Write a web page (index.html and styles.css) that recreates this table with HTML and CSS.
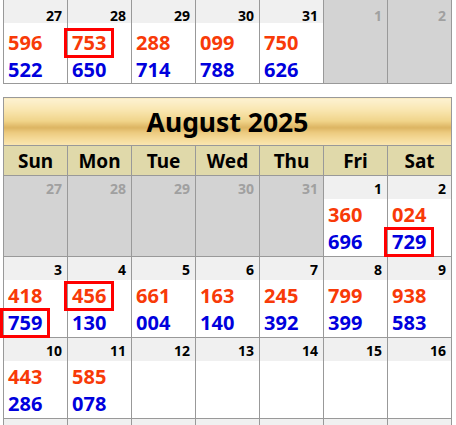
FILE: index.html
```html
<!DOCTYPE html>
<html>
<head>
<meta charset="utf-8">
<link rel="stylesheet" href="styles.css">
</head>
<body>
<div class="page">
  <table class="cal cal-prev">
    <tr>
      <td><div class="dnum">27</div><div class="nums"><div class="r">596</div><div class="b">522</div></div></td>
      <td><div class="dnum">28</div><div class="nums"><div class="r"><span class="hit">753</span></div><div class="b">650</div></div></td>
      <td><div class="dnum">29</div><div class="nums"><div class="r">288</div><div class="b">714</div></div></td>
      <td><div class="dnum">30</div><div class="nums"><div class="r">099</div><div class="b">788</div></div></td>
      <td><div class="dnum">31</div><div class="nums"><div class="r">750</div><div class="b">626</div></div></td>
      <td class="off"><div class="dnum">1</div><div class="nums"></div></td>
      <td class="off"><div class="dnum">2</div><div class="nums"></div></td>
    </tr>
  </table>

  <table class="cal cal-main">
    <thead>
      <tr><th colspan="7" class="title">August 2025</th></tr>
      <tr class="wk"><th>Sun</th><th>Mon</th><th>Tue</th><th>Wed</th><th>Thu</th><th>Fri</th><th>Sat</th></tr>
    </thead>
    <tbody>
      <tr>
        <td class="off"><div class="dnum">27</div><div class="nums"></div></td>
        <td class="off"><div class="dnum">28</div><div class="nums"></div></td>
        <td class="off"><div class="dnum">29</div><div class="nums"></div></td>
        <td class="off"><div class="dnum">30</div><div class="nums"></div></td>
        <td class="off"><div class="dnum">31</div><div class="nums"></div></td>
        <td><div class="dnum">1</div><div class="nums"><div class="r">360</div><div class="b">696</div></div></td>
        <td><div class="dnum">2</div><div class="nums"><div class="r">024</div><div class="b"><span class="hit">729</span></div></div></td>
      </tr>
      <tr>
        <td><div class="dnum">3</div><div class="nums"><div class="r">418</div><div class="b"><span class="hit">759</span></div></div></td>
        <td><div class="dnum">4</div><div class="nums"><div class="r"><span class="hit">456</span></div><div class="b">130</div></div></td>
        <td><div class="dnum">5</div><div class="nums"><div class="r">661</div><div class="b">004</div></div></td>
        <td><div class="dnum">6</div><div class="nums"><div class="r">163</div><div class="b">140</div></div></td>
        <td><div class="dnum">7</div><div class="nums"><div class="r">245</div><div class="b">392</div></div></td>
        <td><div class="dnum">8</div><div class="nums"><div class="r">799</div><div class="b">399</div></div></td>
        <td><div class="dnum">9</div><div class="nums"><div class="r">938</div><div class="b">583</div></div></td>
      </tr>
      <tr>
        <td><div class="dnum">10</div><div class="nums"><div class="r">443</div><div class="b">286</div></div></td>
        <td><div class="dnum">11</div><div class="nums"><div class="r">585</div><div class="b">078</div></div></td>
        <td><div class="dnum">12</div><div class="nums"></div></td>
        <td><div class="dnum">13</div><div class="nums"></div></td>
        <td><div class="dnum">14</div><div class="nums"></div></td>
        <td><div class="dnum">15</div><div class="nums"></div></td>
        <td><div class="dnum">16</div><div class="nums"></div></td>
      </tr>
      <tr>
        <td><div class="dnum"></div><div class="nums"></div></td>
        <td><div class="dnum"></div><div class="nums"></div></td>
        <td><div class="dnum"></div><div class="nums"></div></td>
        <td><div class="dnum"></div><div class="nums"></div></td>
        <td><div class="dnum"></div><div class="nums"></div></td>
        <td><div class="dnum"></div><div class="nums"></div></td>
        <td><div class="dnum"></div><div class="nums"></div></td>
      </tr>
    </tbody>
  </table>
</div>
</body>
</html>
```

FILE: styles.css
```css
html, body {
  margin: 0;
  padding: 0;
  overflow: hidden;
  background: #fff;
}
body {
  font-family: "Noto Sans", "Open Sans", sans-serif;
  font-weight: 700;
  color: #000;
}
.page {
  padding: 0 4px 0 3px;
}
.cal {
  border-collapse: collapse;
  table-layout: fixed;
  width: 449px;
}
.cal td,
.cal th {
  border: 1px solid #999;
  padding: 0;
  vertical-align: top;
}
.cal-prev {
  margin-top: -1px;
}
.cal-main {
  margin-top: 13px;
}
.title {
  height: 48px;
  box-sizing: border-box;
  vertical-align: middle !important;
  text-align: center;
  font-size: 26.5px;
  line-height: 38px;
  background: linear-gradient(to bottom,
    #fdf2d2 0%,
    #f9e6b0 25%,
    #f0d48a 48%,
    #dcb462 62%,
    #ecca7e 72%,
    #f6dc9c 88%,
    #fae6b2 100%);
}
.wk th {
  height: 30px;
  box-sizing: border-box;
  vertical-align: middle;
  text-align: center;
  font-size: 19px;
  line-height: 26px;
  background: #e0d9aa;
}
.dnum {
  height: 23px;
  box-sizing: border-box;
  padding: 3px 5px 0 0;
  text-align: right;
  font-size: 14px;
  line-height: 19px;
  background: #f0f0f0;
}
.nums {
  height: 57px;
  box-sizing: border-box;
  padding: 2px 4px 0;
  font-size: 20px;
  line-height: 27px;
}
.cal-prev .dnum {
  padding-top: 6px;
}
.cal-prev .nums {
  height: 60px;
  padding-top: 6px;
}
.r {
  color: #f83a08;
}
.b {
  color: #0000dd;
}
.off {
  background: #d3d3d3;
}
.off .dnum {
  background: transparent;
  color: #a0a0a0;
}
.hit {
  display: inline-block;
  line-height: 24px;
  padding: 0 5px;
  margin: 0 -5px;
  outline: 3px solid #ff0000;
}
```
